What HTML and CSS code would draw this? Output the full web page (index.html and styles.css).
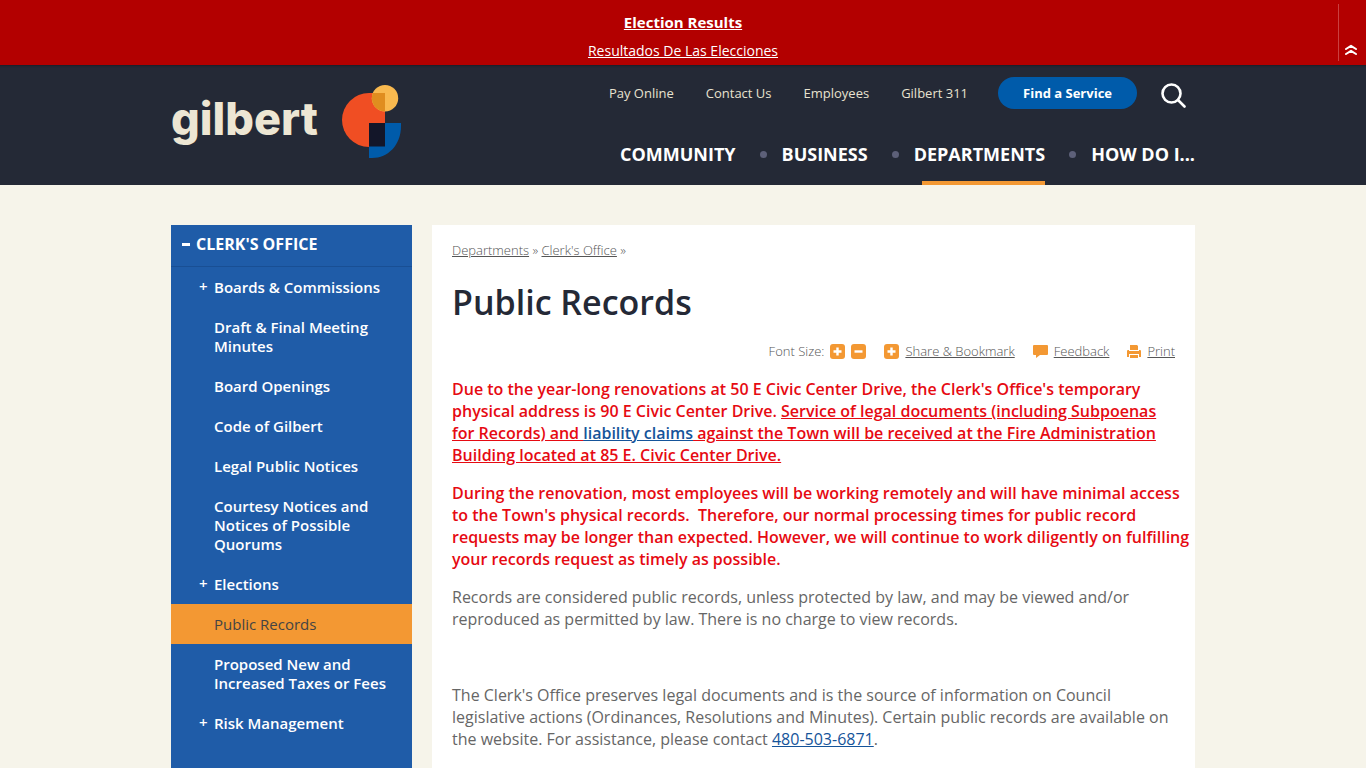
FILE: index.html
```html
<!DOCTYPE html>
<html lang="en">
<head>
<meta charset="utf-8">
<title>Public Records | Gilbert</title>
<meta name="viewport" content="width=device-width, initial-scale=1">
<link rel="stylesheet" href="styles.css">
</head>
<body>
<aside class="alert" aria-label="Alerts">
  <div class="alert-links">
    <a class="alert-main" href="#">Election Results</a>
    <a class="alert-second" href="#">Resultados De Las Elecciones</a>
  </div>
  <button class="alert-toggle" type="button" aria-label="Collapse alert">
    <svg width="12" height="12" viewBox="0 0 12 12" fill="none" stroke="#fff" stroke-width="2" stroke-linecap="round" stroke-linejoin="round"><path d="M1 5 6 1.800l5 3.200M1 10 6 6.800l5 3.200"/></svg>
  </button>
</aside>

<header class="site-header">
  <div class="wrap header-row">
    <a class="logo" href="#" aria-label="Gilbert home">
      <span class="logo-word">gilbert</span>
      <svg class="logo-mark" width="60" height="73" viewBox="0 0 60 73">
        <path fill="#f04e23" d="M44 8v54H28A27 27 0 0 1 28 8z"/>
        <path fill="#005baa" d="M28 38h32v3c0 19-13 32-29 32h-3z"/>
        <path fill="#131629" d="M28 38h16v23.500H28z"/>
        <circle cx="44" cy="13.200" r="13.200" fill="#f9b94f"/>
        <path fill="#e08d1f" d="M44 8v18.400A13.200 13.200 0 0 1 31.900 8z"/>
      </svg>
    </a>
    <div class="header-nav">
      <nav class="top-links" aria-label="Quick links">
        <a href="#">Pay Online</a>
        <a href="#">Contact Us</a>
        <a href="#">Employees</a>
        <a href="#">Gilbert 311</a>
        <a class="service" href="#">Find a Service</a>
        <button class="search" type="button" aria-label="Search">
          <svg width="25" height="25" viewBox="0 0 25 25" fill="none" stroke="#fff" stroke-width="2.600" stroke-linecap="round"><circle cx="10.500" cy="10.500" r="9"/><path d="m17 17 6.500 6.500"/></svg>
        </button>
      </nav>
      <nav class="main-nav" aria-label="Main">
        <a href="#">COMMUNITY</a>
        <a href="#">BUSINESS</a>
        <a class="current" href="#">DEPARTMENTS</a>
        <a href="#">HOW DO I...</a>
      </nav>
    </div>
  </div>
</header>

<div class="wrap page">
  <nav class="side" aria-label="Section">
    <a class="side-head" href="#"><span class="side-minus"></span>CLERK'S OFFICE</a>
    <ul class="side-list">
      <li><a class="more" href="#">Boards &amp; Commissions</a></li>
      <li><a href="#">Draft &amp; Final Meeting Minutes</a></li>
      <li><a href="#">Board Openings</a></li>
      <li><a href="#">Code of Gilbert</a></li>
      <li><a href="#">Legal Public Notices</a></li>
      <li><a href="#">Courtesy Notices and Notices of Possible Quorums</a></li>
      <li><a class="more" href="#">Elections</a></li>
      <li><a class="active" href="#">Public Records</a></li>
      <li><a href="#">Proposed New and Increased Taxes or Fees</a></li>
      <li><a class="more" href="#">Risk Management</a></li>
    </ul>
  </nav>

  <main class="content">
    <nav class="crumbs" aria-label="Breadcrumb"><a href="#">Departments</a> » <a href="#">Clerk's Office</a> »</nav>
    <h1>Public Records</h1>
    <div class="tools">
      <div class="tool sizes">
        <span>Font Size:</span>
        <button type="button" aria-label="Increase font size"><svg width="15" height="15" viewBox="0 0 15 15"><rect width="15" height="15" rx="3" fill="#f39833"/><path d="M7.500 3.500v8M3.500 7.500h8" stroke="#fff" stroke-width="2.400"/></svg></button>
        <button type="button" aria-label="Decrease font size"><svg width="15" height="15" viewBox="0 0 15 15"><rect width="15" height="15" rx="3" fill="#f39833"/><path d="M3.500 7.500h8" stroke="#fff" stroke-width="2.400"/></svg></button>
      </div>
      <a class="tool" href="#"><svg width="15" height="15" viewBox="0 0 15 15"><rect width="15" height="15" rx="3" fill="#f39833"/><path d="M7.500 3.500v8M3.500 7.500h8" stroke="#fff" stroke-width="2.400"/></svg><span>Share &amp; Bookmark</span></a>
      <a class="tool" href="#"><svg width="15" height="15" viewBox="0 0 15 15"><path fill="#f39833" d="M1 1h13q1 0 1 1v8q0 1-1 1H7l-4 3v-3H1q-1 0-1-1V2q0-1 1-1z"/></svg><span>Feedback</span></a>
      <a class="tool" href="#"><svg width="14" height="15" viewBox="0 0 14 15"><path fill="#f39833" d="M3 1h7l1 1v4H3zM1 6h1v1h10V6h1q1 0 1 1v6h-2v-3H2v3H0V7q0-1 1-1zM2 7h10v2H2zM3 11h8v3H3z"/></svg><span>Print</span></a>
    </div>
    <p class="notice">Due to the year-long renovations at 50 E Civic Center Drive, the Clerk's Office's temporary<br>physical address is 90 E Civic Center Drive. <u>Service of legal documents (including Subpoenas<br>for Records) and <a href="#">liability claims</a> against the Town will be received at the Fire Administration<br>Building located at 85 E. Civic Center Drive.</u></p>
    <p class="notice">During the renovation, most employees will be working remotely and will have minimal access<br>to the Town's physical records.&nbsp; Therefore, our normal processing times for public record<br>requests may be longer than expected. However, we will continue to work diligently on fulfilling<br>your records request as timely as possible.</p>
    <p>Records are considered public records, unless protected by law, and may be viewed and/or<br>reproduced as permitted by law. There is no charge to view records.</p>
    <p class="spaced">The Clerk's Office preserves legal documents and is the source of information on Council<br>legislative actions (Ordinances, Resolutions and Minutes). Certain public records are available on<br>the website. For assistance, please contact <a href="#">480-503-6871</a>.</p>
  </main>
</div>
</body>
</html>
```
FILE: styles.css
```css
* { box-sizing: border-box; }

body {
  margin: 0;
  height: 100vh;
  overflow: hidden;
  display: flex;
  flex-direction: column;
  background: #f6f4ea;
  color: #666;
  font: 400 16px/22px "Open Sans", "Noto Sans", sans-serif;
}

button {
  padding: 0;
  border: 0;
  background: none;
  cursor: pointer;
}

svg { display: block; }

.wrap {
  width: 100%;
  max-width: 1024px;
  margin: 0 auto;
}

.alert {
  display: flex;
  flex: none;
  padding: 4px 0;
  background: #b30000;
}

.alert-links {
  flex: 1;
  display: flex;
  flex-direction: column;
  align-items: center;
  gap: 9px;
  padding: 8px 0 0 28px;
}

.alert-links a { color: #fff; line-height: 20px; }
.alert-main { font-size: 15px; font-weight: 700; }
.alert-second { font-size: 14px; }

.alert-toggle {
  width: 28px;
  display: flex;
  align-items: flex-end;
  justify-content: flex-start;
  padding: 0 0 5px 6px;
  border-left: 1px solid #ca4040;
}

.site-header {
  flex: none;
  background: #242936;
  box-shadow: inset 0 3px 2px -2px #1b1f29;
}

.header-row {
  display: flex;
  justify-content: space-between;
}

.logo {
  display: flex;
  align-items: flex-start;
  gap: 23px;
  padding-top: 20px;
  text-decoration: none;
}

.logo-word {
  color: #ede6d3;
  font: 800 45px/68px Inter, sans-serif;
}

.header-nav {
  display: flex;
  flex-direction: column;
  align-items: flex-end;
  gap: 24px;
  padding-top: 12px;
}

.top-links {
  display: flex;
  align-items: center;
  gap: 32px;
  padding-right: 9px;
}

.top-links a {
  color: #e8e2d0;
  font-size: 13px;
  text-decoration: none;
}

.top-links .service {
  margin: 0 -8px 0 -2px;
  padding: 5px 25px;
  border-radius: 16px;
  background: #005baa;
  color: #fff;
  font-weight: 700;
}

.search { padding-top: 4px; }

.main-nav {
  display: flex;
  gap: 46px;
}

.main-nav a {
  position: relative;
  padding: 10px 0 20px;
  color: #fff;
  font-size: 18px;
  font-weight: 700;
  text-decoration: none;
}

.main-nav a + a::before {
  content: "";
  position: absolute;
  top: 18px;
  left: -22px;
  width: 7px;
  height: 7px;
  border-radius: 50%;
  background: #5d6079;
}

.main-nav .current::after {
  content: "";
  position: absolute;
  right: 0;
  bottom: 0;
  left: 8px;
  height: 4px;
  background: #f39833;
}

.page {
  flex: 1;
  display: grid;
  grid-template-columns: 241px 1fr;
  gap: 20px;
  padding-top: 40px;
}

.side { background: #1f5ca8; }

.side a {
  display: block;
  color: #fff;
  text-decoration: none;
}

.side .side-head {
  display: flex;
  align-items: center;
  gap: 6px;
  padding: 8px 11px 11px;
  border-bottom: 1px solid #194f94;
  font-size: 16px;
  font-weight: 700;
}

.side-minus {
  width: 8px;
  height: 3px;
  background: #fff;
}

.side-list {
  margin: 0;
  padding: 0;
  list-style: none;
}

.side-list a {
  position: relative;
  padding: 11px 24px 10px 43px;
  font-size: 15px;
  font-weight: 600;
  line-height: 19px;
}

.side-list .more::before {
  content: "+";
  position: absolute;
  left: 28px;
  top: 10px;
}

.side-list .active {
  background: #f39833;
  color: #444;
  font-weight: 400;
}

.content {
  padding: 14px 20px;
  background: #fff;
}

.crumbs,
.tools {
  color: #555;
  font-size: 13px;
  font-weight: 300;
}

.crumbs a, .tools a { color: #555; }

h1 {
  margin: 20px 0 17px;
  color: #242936;
  font-size: 34px;
  font-weight: 600;
  line-height: 42px;
}

.tools {
  display: flex;
  justify-content: flex-end;
  gap: 18px;
  margin-bottom: 16px;
}

.tool {
  display: flex;
  align-items: center;
  gap: 6px;
  text-decoration: none;
}

a.tool span { text-decoration: underline; }

p { margin: 0 -18px 16px 0; }
.notice { color: #e60a12; font-weight: 600; }
.content p a { color: #15549a; }
.spaced { margin-top: 54px; }
```
